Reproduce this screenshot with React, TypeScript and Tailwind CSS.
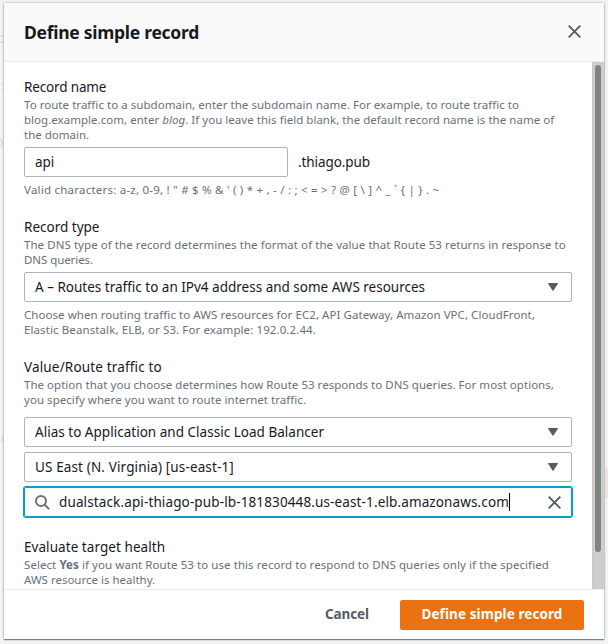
import type { ReactNode } from "react";

function Label({ children, className = "" }: { children: ReactNode; className?: string }) {
  return <div className={`h-5 whitespace-nowrap text-[13.5px] leading-5 text-[#16191f] ${className}`}>{children}</div>;
}

function Line({ children, className = "" }: { children: ReactNode; className?: string }) {
  return <div className={`h-[15px] whitespace-nowrap text-[11.5px] leading-[15px] text-[#687078] ${className}`}>{children}</div>;
}

function CloseIcon({ className = "" }: { className?: string }) {
  return (
    <svg viewBox="0 0 16 16" className={className} fill="none" stroke="#545b64" strokeWidth="2">
      <path d="M1.8 1.8 14.2 14.2M14.2 1.8 1.8 14.2" />
    </svg>
  );
}

function Select({ children, className = "" }: { children: ReactNode; className?: string }) {
  return (
    <div className="flex h-[30px] w-[548px] items-center justify-between rounded-[2px] border border-[#aab7b8] bg-white pl-[10px] pr-[13px] text-[13.5px] text-[#16191f]">
      <span className={`whitespace-nowrap pb-px leading-5 ${className}`}>{children}</span>
      <svg viewBox="0 0 10 8" className="h-2 w-[10px]">
        <path d="M0.5 0.5h9L5 7.5z" fill="#545b64" stroke="#545b64" strokeLinejoin="round" />
      </svg>
    </div>
  );
}

export default function App() {
  return (
    <div className="relative h-[644px] w-[608px] overflow-hidden bg-[#f2f3f3] px-1 pt-[3px] font-['Noto_Sans','Open_Sans',sans-serif]">
      <div className="absolute left-0 top-[35px] h-2 w-1 border-y-2 border-[#e1e3e3]" />
      <div className="absolute left-0 top-[84px] h-[6px] w-1 border-y border-[#e4e6e6]" />
      <div className="absolute left-0 top-[139px] h-2 w-[3px] rounded-r-full border-2 border-l-0 border-[#dfe2e2]" />
      <div className="absolute left-[1px] top-[435px] h-[7px] w-[3px] bg-[#e4e6e6]" />
      <div className="absolute right-0 top-[468px] h-[30px] w-[3px] bg-[#f0e5de]" />

      <div className="relative flex h-[636px] w-[600px] flex-col bg-white shadow-[0_1px_1px_0_rgba(0,28,36,0.45),0_0_2px_0_rgba(0,28,36,0.4)]">
        <header className="flex h-[59px] shrink-0 items-center justify-between border-b border-[#eaeded] bg-[#fafafa] pl-5 pr-[22px]">
          <h2 className="whitespace-nowrap text-[17.5px] font-bold leading-6 tracking-[-0.27px] text-[#16191f]">Define simple record</h2>
          <CloseIcon className="mb-px h-[15px] w-[15px]" />
        </header>

        <div className="flex h-[527px] shrink-0">
          <main className="h-full min-w-0 flex-1 overflow-hidden pl-5 pt-[15px]">
            <section>
              <Label className="tracking-[-0.15px]">Record name</Label>
              <div className="pb-px">
                <Line className="tracking-[0.042px]">To route traffic to a subdomain, enter the subdomain name. For example, to route traffic to</Line>
                <Line className="tracking-[0.032px]">blog.example.com, enter <i>blog</i>. If you leave this field blank, the default record name is the name of</Line>
                <Line>the domain.</Line>
              </div>
              <div className="mt-1 flex items-center gap-[10px] text-[13.5px] leading-5 text-[#16191f]">
                <div className="flex h-[30px] w-[264px] items-center rounded-[2px] border border-[#aab7b8] pb-px pl-[10px] tracking-[-0.1px]">api</div>
                <span className="pb-px tracking-[-0.08px]">.thiago.pub</span>
              </div>
              <Line className="mt-[5px] tracking-[0.225px]">{"Valid characters: a-z, 0-9, ! \" # $ % & ' ( ) * + , - / : ; < = > ? @ [ \\ ] ^ _ ` { | } . ~"}</Line>
            </section>

            <section className="mt-5">
              <Label>Record type</Label>
              <div className="pb-px">
                <Line className="tracking-[0.06px]">The DNS type of the record determines the format of the value that Route 53 returns in response to</Line>
                <Line className="tracking-[-0.07px]">DNS queries.</Line>
              </div>
              <div className="mt-1">
                <Select>A – Routes traffic to an IPv4 address and some AWS resources</Select>
              </div>
              <div className="pt-[5px]">
                <Line className="tracking-[0.058px]">Choose when routing traffic to AWS resources for EC2, API Gateway, Amazon VPC, CloudFront,</Line>
                <Line className="tracking-[0.1px]">Elastic Beanstalk, ELB, or S3. For example: 192.0.2.44.</Line>
              </div>
            </section>

            <section className="mt-5">
              <Label className="tracking-[0.16px]">Value/Route traffic to</Label>
              <div className="pb-px">
                <Line className="tracking-[0.03px]">The option that you choose determines how Route 53 responds to DNS queries. For most options,</Line>
                <Line className="tracking-[0.045px]">you specify where you want to route internet traffic.</Line>
              </div>
              <div className="mt-[9px] flex flex-col gap-[5px]">
                <Select className="tracking-[0.02px]">Alias to Application and Classic Load Balancer</Select>
                <Select className="tracking-[0.13px]">US East (N. Virginia) [us-east-1]</Select>
                <div className="flex h-[30px] w-[548px] items-center rounded-[2px] border border-[#00a1c9] pl-[10px] pr-[9px] text-[13.5px] text-[#16191f] shadow-[0_0_0_1px_#00a1c9]">
                  <svg viewBox="0 0 15 15" className="h-[15px] w-[15px] shrink-0" fill="none" stroke="#687078" strokeWidth="2">
                    <circle cx="6" cy="6" r="5" />
                    <path d="m9.7 9.7 4.4 4.4" />
                  </svg>
                  <span className="ml-[9px] whitespace-nowrap pb-px leading-5 tracking-[0.126px]">dualstack.api-thiago-pub-lb-181830448.us-east-1.elb.amazonaws.com</span>
                  <span className="h-[18px] w-px bg-black" />
                  <CloseIcon className="ml-auto h-[15px] w-[15px]" />
                </div>
              </div>
            </section>

            <section className="mt-5">
              <Label className="tracking-[0.06px]">Evaluate target health</Label>
              <div className="pb-px">
                <Line className="tracking-[0.07px]">Select <b>Yes</b> if you want Route 53 to use this record to respond to DNS queries only if the specified</Line>
                <Line>AWS resource is healthy.</Line>
              </div>
            </section>
          </main>
          <div className="h-full w-3 shrink-0 border-l border-[#c9c5c0] bg-[#cdcdcd] pl-[2px] pt-[3px]">
            <div className="h-[487px] w-[6px] rounded-full bg-[#7f8483]" />
          </div>
        </div>

        <footer className="flex h-[50px] shrink-0 items-center justify-end border-t border-[#eaeded] bg-white pr-5 text-[13.5px] font-bold leading-5">
          <button className="mr-[31px] whitespace-nowrap pb-px tracking-[-0.08px] text-[#545b64]">Cancel</button>
          <button className="h-[30px] w-[184px] whitespace-nowrap rounded-[2px] bg-[#ec7211] pb-px tracking-[0.09px] text-white">Define simple record</button>
        </footer>
      </div>
    </div>
  );
}
